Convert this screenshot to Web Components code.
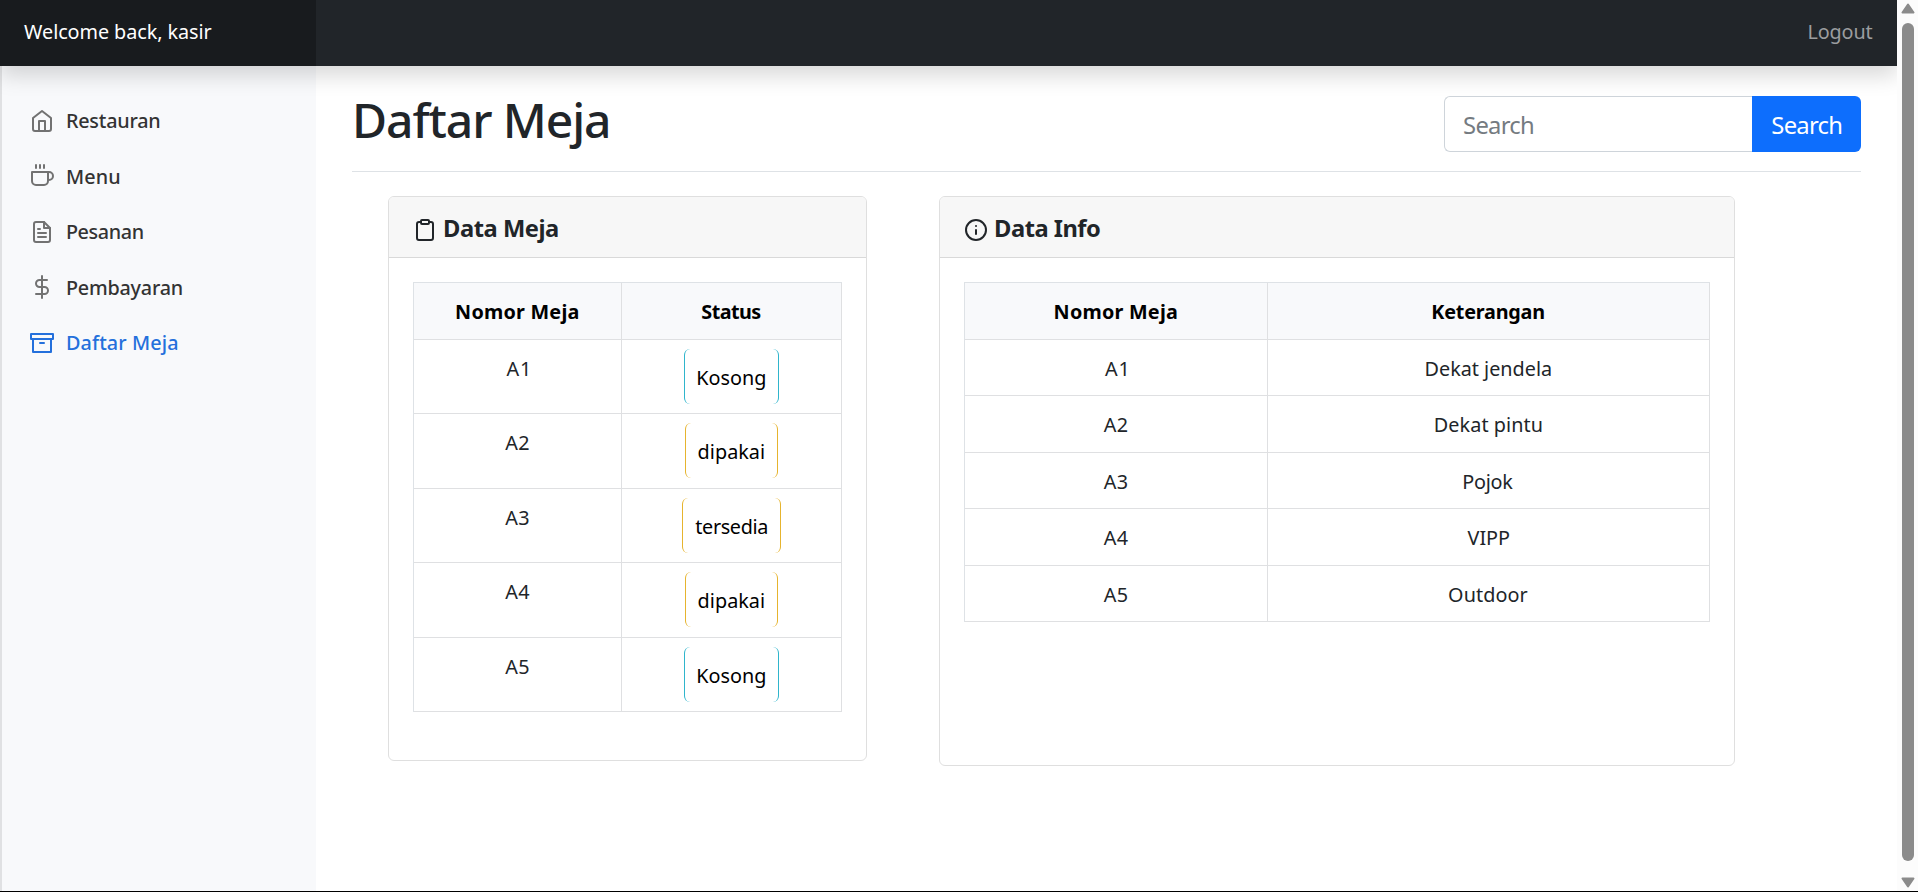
<!DOCTYPE html>
<html lang="id">
<head>
<meta charset="utf-8">
<title>Daftar Meja</title>
<style>
html,body{margin:0;height:100%;overflow:hidden}
body{background:#fff;color:#212529;font-family:"Noto Sans","Open Sans",sans-serif;font-size:19.8px}
</style>
</head>
<body>
<app-shell></app-shell>
<script>
const define = (name, html, setup) => {
  const t = document.createElement('template');
  t.innerHTML = html;
  customElements.define(name, class extends HTMLElement {
    connectedCallback() {
      if (this.shadowRoot) return;
      this.attachShadow({mode: 'open'}).append(t.content.cloneNode(true));
      if (setup) setup.call(this, this.shadowRoot);
    }
  });
};

/* Text whose tracking is adjusted so that its ink spans the width in "w". */
const ctx = document.createElement('canvas').getContext('2d');
define('fit-text', `<style>:host{display:inline-block;white-space:nowrap}</style><span><slot></slot></span>`, function (root) {
  const cs = getComputedStyle(this), s = this.textContent, n = s.length;
  ctx.font = `${cs.fontWeight} ${cs.fontSize} ${cs.fontFamily}`;
  const m = ctx.measureText(s);
  const ink = m.actualBoundingBoxRight + m.actualBoundingBoxLeft;
  const gap = (parseFloat(this.getAttribute('w')) - 0.6 - ink) / (n - 1);
  const span = root.querySelector('span');
  span.style.letterSpacing = gap + 'px';
  span.style.marginLeft = m.actualBoundingBoxLeft + 0.1 + 'px';
  span.style.marginRight = 0.5 - (gap + m.width - m.actualBoundingBoxRight) + 'px';
});

const icons = {
  home: '<path d="M3 9l9-7 9 7v11a2 2 0 0 1-2 2H5a2 2 0 0 1-2-2z"/><polyline points="9 22 9 12 15 12 15 22"/>',
  coffee: '<path d="M18 8h1a4 4 0 0 1 0 8h-1"/><path d="M2 8h16v9a4 4 0 0 1-4 4H6a4 4 0 0 1-4-4V8z"/><path d="M6 1v3M10 1v3M14 1v3"/>',
  file: '<path d="M14 2H6a2 2 0 0 0-2 2v16a2 2 0 0 0 2 2h12a2 2 0 0 0 2-2V8z"/><polyline points="14 2 14 8 20 8"/><path d="M16 13H8M16 17H8M10 9H8"/>',
  dollar: '<path d="M12 1v22"/><path d="M17 5H9.500a3.500 3.500 0 0 0 0 7h5a3.500 3.500 0 0 1 0 7H6"/>',
  archive: '<polyline points="21 8 21 21 3 21 3 8"/><rect x="1" y="3" width="22" height="5"/><path d="M10 12h4"/>',
  clipboard: '<path d="M16 4h2a2 2 0 0 1 2 2v14a2 2 0 0 1-2 2H6a2 2 0 0 1-2-2V6a2 2 0 0 1 2-2h2"/><rect x="8" y="2" width="8" height="4" rx="1"/>',
  info: '<circle cx="12" cy="12" r="10"/><path d="M12 16v-4M12 8h.01"/>'
};
define('line-icon', `<style>:host{display:block;width:24px;height:24px;flex:none}svg{display:block;overflow:visible}</style>
<svg width="24" height="24" viewBox="0 0 24 24" fill="none" stroke="currentColor" stroke-width="2" stroke-linecap="round" stroke-linejoin="round"></svg>`, function (root) {
  root.querySelector('svg').innerHTML = icons[this.getAttribute('name')];
});

define('top-bar', `<style>
:host{display:flex;justify-content:space-between;height:66px;background:#212529;box-shadow:0 10px 20px rgba(0,0,0,.15);position:relative;z-index:1}
div{display:flex;align-items:center;box-sizing:border-box;padding-bottom:3px}
.brand{width:316px;padding-left:24px;background:rgba(0,0,0,.25);color:#fff}
.out{padding-right:24px;color:#9b9d9f}
</style>
<div class="brand"><fit-text w="188">Welcome back, kasir</fit-text></div>
<div class="out"><fit-text w="64.500">Logout</fit-text></div>`);

define('nav-item', `<style>
:host{display:flex;align-items:center;height:55.500px;padding-left:28px;color:#333;font-weight:500}
line-icon{color:#727272;margin-right:12.800px}
:host([active]),:host([active]) line-icon{color:#2470dc}
</style><line-icon></line-icon><div><slot></slot></div>`, function (root) {
  const old = root.querySelector('line-icon'), icon = document.createElement('line-icon');
  icon.setAttribute('name', this.getAttribute('icon'));
  old.replaceWith(icon);
});

define('side-nav', `<style>:host{display:block;width:314px;flex:none;box-sizing:border-box;padding-top:27px;background:#f8f9fb;border-left:2px solid #e0e1e3}</style>
<nav>
<nav-item icon="home"><fit-text w="93">Restauran</fit-text></nav-item>
<nav-item icon="coffee"><fit-text w="53">Menu</fit-text></nav-item>
<nav-item icon="file"><fit-text w="76.500">Pesanan</fit-text></nav-item>
<nav-item icon="dollar"><fit-text w="115.500">Pembayaran</fit-text></nav-item>
<nav-item icon="archive" active><fit-text w="111">Daftar Meja</fit-text></nav-item>
</nav>`);

define('page-head', `<style>
:host{display:flex;justify-content:space-between;align-items:flex-start;height:105px;border-bottom:1px solid #dee2e6}
h1{margin:0;padding:21px 0 0 4px;font-size:48px;line-height:66px;font-weight:500}
form{display:flex;height:56px;margin:30px 0 0;font-size:23.800px;line-height:56px}
.field{box-sizing:border-box;width:308px;border:1px solid #ced4da;border-right:0;border-radius:6px 0 0 6px;padding-left:19px;color:#757b81;background:#fff}
.btn{box-sizing:border-box;width:109px;padding-left:1px;text-align:center;background:#0d6efd;color:#fff;border-radius:0 6px 6px 0;line-height:58px}
</style>
<h1><fit-text w="252.500">Daftar Meja</fit-text></h1>
<form><div class="field"><fit-text w="69.500">Search</fit-text></div><div class="btn"><fit-text w="69.500">Search</fit-text></div></form>`);

define('data-card', `<style>
:host{display:block;box-sizing:border-box;border:1px solid #dfdfdf;border-radius:6px;background:#fff;flex:none}
header{display:flex;align-items:center;height:60px;padding-left:24px;background:#f7f7f7;border-bottom:1px solid #d9d9d9;border-radius:5px 5px 0 0;font-size:23.700px;font-weight:700}
section{padding:24px 0 0 24px}
::slotted([slot="title"]){padding-top:2px}
</style><header><slot name="icon"></slot><slot name="title"></slot></header><section><slot></slot></section>`);

define('data-table', `<style>
:host{display:grid;width:max-content;border:solid #dee2e6;border-width:1px 0 0 1px;text-align:center;line-height:57px}
::slotted(*){box-sizing:border-box;border:solid #dfe0e2;border-width:0 1px 1px 0;overflow:hidden}
::slotted(b){background:#f8f9fb;color:#000}
</style><slot></slot>`, function () {
  this.style.gridTemplateColumns = this.getAttribute('cols');
  this.style.gridTemplateRows = this.getAttribute('rows');
});

define('status-box', `<style>
:host{display:flex;justify-content:center;padding-top:9px}
div{box-sizing:border-box;height:55px;line-height:57px;border:solid #2fb5cc;border-width:0 1px;border-radius:6px;padding:0 12px;color:#000}
:host([busy]) div{border-color:#e6b42e}
</style><div><slot></slot></div>`);

define('scroll-bar', `<style>
:host{display:flex;flex-direction:column;align-items:center;box-sizing:border-box;width:21px;height:891px;background:#fcfcfc;padding:3px 0 3px}
i{width:12px;flex:1;margin:9px 0 16px;border-radius:6px;background:#8b8b8b}
svg{display:block}
</style>
<svg width="14" height="11" viewBox="0 0 14 11"><path d="M7 1.500L12.500 9.500H1.500z" fill="#8b8b8b" stroke="#8b8b8b" stroke-width="2" stroke-linejoin="round"/></svg>
<i></i>
<svg width="14" height="11" viewBox="0 0 14 11"><path d="M7 9.500L12.500 1.500H1.500z" fill="#8b8b8b" stroke="#8b8b8b" stroke-width="2" stroke-linejoin="round"/></svg>`);

define('app-shell', `<style>
:host{display:flex;box-sizing:border-box;height:892px;border-bottom:1px solid #000;background:#fff}
.page{width:1897px;display:flex;flex-direction:column;overflow:hidden}
.body{display:flex;flex:1}
main{flex:1;padding:0 36px}
.cards{display:flex;align-items:flex-start;gap:72px;padding:24px 0 0 36px}
side-nav{width:316px}
line-icon{margin:6px 8px 0 0}
</style>
<div class="page"><top-bar></top-bar><div class="body"><side-nav></side-nav>
<main><page-head></page-head><div class="cards">
<data-card style="width:479px;height:565px">
<line-icon slot="icon" name="clipboard"></line-icon><fit-text slot="title" w="113.500">Data Meja</fit-text>
<data-table cols="208px 220px" rows="57px 74px 75px 74px 75px 74px">
<b><fit-text w="123">Nomor Meja</fit-text></b><b><fit-text w="60.500">Status</fit-text></b>
<div><fit-text w="22">A1</fit-text></div><div><status-box><fit-text w="68.500">Kosong</fit-text></status-box></div>
<div><fit-text w="24.500">A2</fit-text></div><div><status-box busy><fit-text w="66">dipakai</fit-text></status-box></div>
<div><fit-text w="24.500">A3</fit-text></div><div><status-box busy><fit-text w="72.500">tersedia</fit-text></status-box></div>
<div><fit-text w="24.500">A4</fit-text></div><div><status-box busy><fit-text w="66">dipakai</fit-text></status-box></div>
<div><fit-text w="24.500">A5</fit-text></div><div><status-box><fit-text w="68.500">Kosong</fit-text></status-box></div>
</data-table></data-card>
<data-card style="width:796px;height:570px">
<line-icon slot="icon" name="info"></line-icon><fit-text slot="title" w="104.500">Data Info</fit-text>
<data-table cols="303px 442px" rows="57px 56px 57px 56px 57px 56px">
<b><fit-text w="123">Nomor Meja</fit-text></b><b><fit-text w="112.500">Keterangan</fit-text></b>
<div><fit-text w="22">A1</fit-text></div><div><fit-text w="126">Dekat jendela</fit-text></div>
<div><fit-text w="24.500">A2</fit-text></div><div><fit-text w="107.500">Dekat pintu</fit-text></div>
<div><fit-text w="24.500">A3</fit-text></div><div><fit-text w="50.500">Pojok</fit-text></div>
<div><fit-text w="24.500">A4</fit-text></div><div><fit-text w="42">VIPP</fit-text></div>
<div><fit-text w="24.500">A5</fit-text></div><div><fit-text w="79">Outdoor</fit-text></div>
</data-table></data-card>
</div></main></div></div><scroll-bar></scroll-bar>`);
</script>
</body>
</html>
